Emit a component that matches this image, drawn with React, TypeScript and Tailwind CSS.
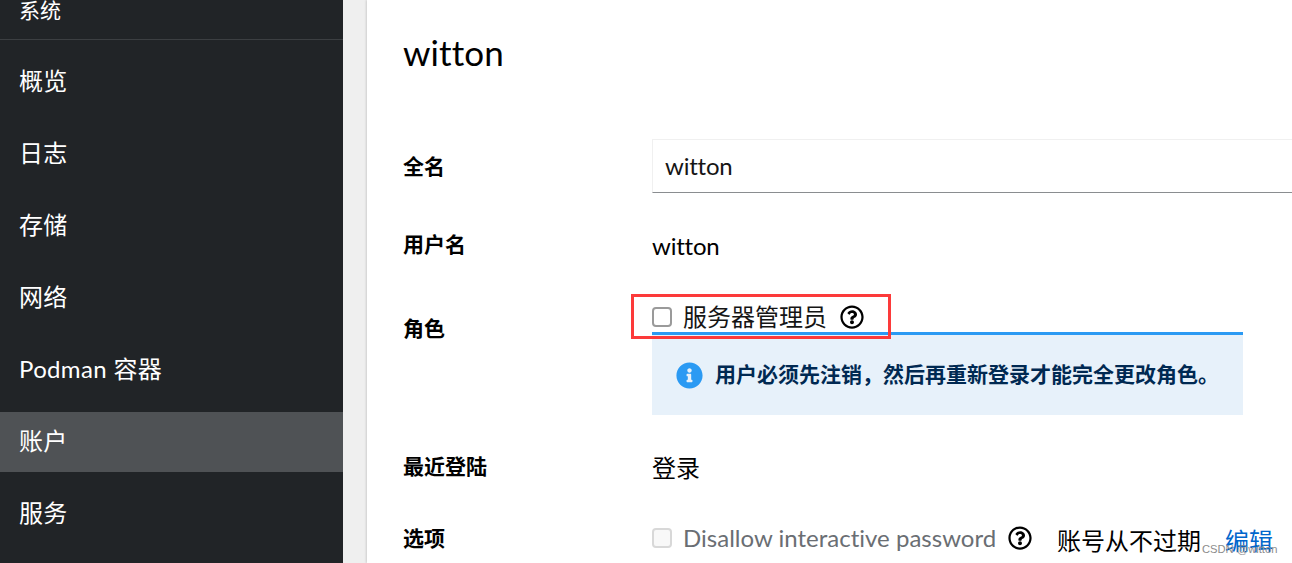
import type { ReactNode } from "react";
import { FaInfoCircle, FaRegQuestionCircle } from "react-icons/fa";

const navItems = ["概览", "日志", "存储", "网络", "Podman 容器", "账户", "服务"];
const activeItem = "账户";

function Sidebar() {
  return (
    <aside className="flex w-[343px] shrink-0 flex-col bg-[#212427] text-white">
      <div className="flex h-10 items-start border-b border-[#3c3f42] pl-[19px]">
        <span className="-mt-[6px] text-[21px] leading-8">系统</span>
      </div>
      <nav className="flex flex-col gap-3 pt-3">
        {navItems.map((item) => (
          <a
            key={item}
            className={`flex h-[60px] shrink-0 items-center pb-[2px] pl-[19px] text-2xl tracking-[0.35px] ${
              item === activeItem ? "bg-[#4f5255]" : ""
            }`}
          >
            {item}
          </a>
        ))}
      </nav>
    </aside>
  );
}

function Label({ children }: { children: ReactNode }) {
  return <div className="-mt-px w-[249px] shrink-0 text-[21px] leading-8 font-bold">{children}</div>;
}

function RoleField() {
  return (
    <div className="relative w-[591px]">
      <div className="flex h-9 items-center pt-[6px]">
        <span className="size-5 rounded-[4px] border-2 border-[#9a9a9a] bg-white" />
        <span className="ml-[11px] text-2xl text-[#151515]">服务器管理员</span>
        <FaRegQuestionCircle className="ml-[13px] size-6" />
      </div>
      <div className="flex h-[83px] items-center border-t-[3px] border-[#2b9af3] bg-[#e7f1fa] pl-6">
        <FaInfoCircle className="size-[27px] text-[#2b9af3]" />
        <span className="ml-3 pb-[2px] text-[21px] font-bold whitespace-nowrap text-[#002952]">
          用户必须先注销，然后再重新登录才能完全更改角色。
        </span>
      </div>
      <div className="absolute -top-[2px] -left-[21px] h-[45px] w-[260px] border-[3px] border-[#fc3a3a]" />
    </div>
  );
}

export default function App() {
  return (
    <div className="relative flex h-[563px] w-[1292px] overflow-hidden bg-[#efefef] font-['Lato','Noto_Sans_CJK_SC',sans-serif] text-black">
      <Sidebar />
      <main className="ml-6 flex min-w-0 flex-1 flex-col bg-white pl-9 shadow-[-1px_0_2px_rgba(3,3,3,0.14)]">
        <h1 className="mt-[28px] h-12 text-[35px] leading-[48px] tracking-[0.1px]">witton</h1>

        <div className="mt-[63px] flex h-[54px]">
          <div className="pt-3">
            <Label>全名</Label>
          </div>
          <div className="flex flex-1 items-center border-t border-b border-l border-[#f0f0f0] border-b-[#8a8d90] pl-3 text-2xl tracking-[-0.2px] text-[#151515]">
            witton
          </div>
        </div>

        <div className="mt-9 flex h-9">
          <Label>用户名</Label>
          <span className="-mt-px text-2xl leading-9 tracking-[-0.2px]">witton</span>
        </div>

        <div className="mt-[31px] flex h-[119px]">
          <div className="pt-[17px]">
            <Label>角色</Label>
          </div>
          <RoleField />
        </div>

        <div className="mt-9 flex h-9">
          <Label>最近登陆</Label>
          <span className="-mt-px text-2xl leading-9">登录</span>
        </div>

        <div className="mt-9 flex h-9">
          <Label>选项</Label>
          <div className="-mt-px flex h-8 items-center whitespace-nowrap">
            <span className="size-5 rounded-[4px] border-2 border-[#d8d8d8] bg-[#f8f8f8]" />
            <span className="ml-[11px] w-[313px] text-2xl tracking-[0.01px] text-[#6a6e73] [font-variant-ligatures:none]">
              Disallow interactive password
            </span>
            <FaRegQuestionCircle className="ml-3 size-6" />
            <span className="ml-[25px] pt-[5px] text-2xl">账号从不过期</span>
            <a className="ml-6 pt-[5px] text-2xl text-[#0066cc]">编辑</a>
          </div>
        </div>
      </main>
      <span className="absolute top-[541px] left-[1202px] font-['Liberation_Sans',sans-serif] text-[11.2px] leading-4 whitespace-nowrap text-[#8c8c8c]">
        CSDN @witton
      </span>
    </div>
  );
}
